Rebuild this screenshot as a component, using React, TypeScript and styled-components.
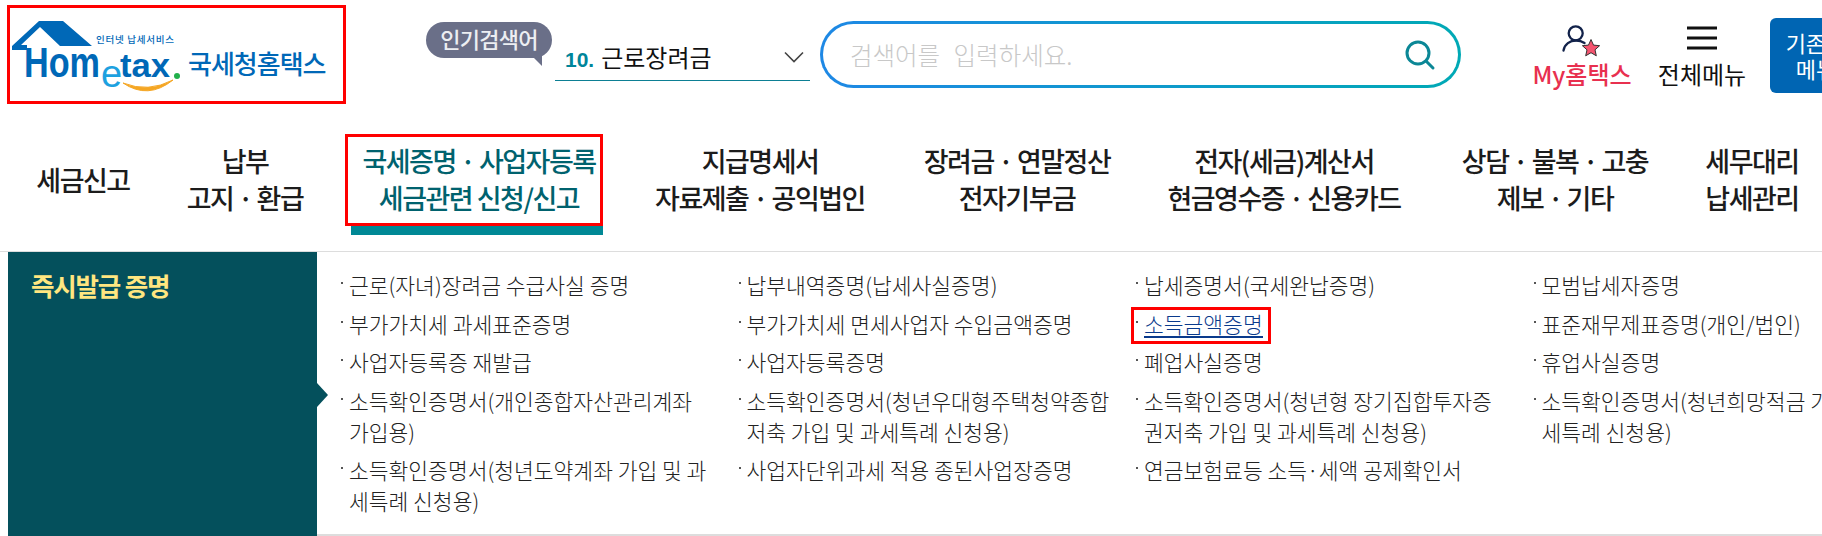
import React from "react";
import styled, { createGlobalStyle } from "styled-components";

const GlobalStyle = createGlobalStyle`
  html, body {
    margin: 0;
    padding: 0;
    background: #fff;
  }
  body {
    font-family: "Noto Sans CJK KR", "Noto Sans", sans-serif;
  }
`;

const Page = styled.div`
  width: 1822px;
  height: 536px;
  overflow: hidden;
  background: #fff;
`;

const Header = styled.header`
  display: flex;
  height: 120px;
  padding: 5px 0 0 7px;
  box-sizing: border-box;
`;

const LogoBox = styled.div`
  width: 339px;
  height: 99px;
  box-sizing: border-box;
  border: 3px solid #f00;
  flex: none;
`;

const PopularWrap = styled.div`
  display: flex;
  margin-left: 80px;
  padding-top: 17px;
  flex: none;
`;

const Bubble = styled.div`
  position: relative;
  width: 126px;
  height: 36px;
  border-radius: 18px;
  background: #6a6f88;
  color: #eceef2;
  font-size: 22px;
  font-weight: 500;
  line-height: 33px;
  text-align: center;
  letter-spacing: -0.7px;
  white-space: nowrap;

  &::after {
    content: "";
    position: absolute;
    right: 10px;
    bottom: -8px;
    border-top: 10px solid #6a6f88;
    border-left: 10px solid transparent;
  }
`;

const KeywordSelect = styled.div`
  display: flex;
  align-items: center;
  justify-content: space-between;
  width: 255px;
  height: 48px;
  margin: 11px 0 0 3px;
  padding: 0 6px 0 10px;
  box-sizing: border-box;
  border-bottom: 1px solid #0c7f94;
  font-size: 24px;
  color: #111;
`;

const KeywordRank = styled.b`
  color: #00859a;
  margin-right: 7px;
  font-family: "Liberation Sans", sans-serif;
  font-size: 21px;
`;

const SearchBox = styled.div`
  display: flex;
  align-items: center;
  justify-content: space-between;
  width: 641px;
  height: 67px;
  margin: 16px 0 0 10px;
  padding: 0 21px 0 27px;
  box-sizing: border-box;
  border: 3px solid transparent;
  border-radius: 34px;
  background:
    linear-gradient(#fff, #fff) padding-box,
    linear-gradient(90deg, #1e88e5, #00a9b5) border-box;
  color: #c8c8c8;
  font-size: 24.5px;
  font-weight: 300;
  word-spacing: 8px;
  flex: none;
`;

const QuickLink = styled.div<{ $width: number; $ml: number; $color: string; $weight: number }>`
  display: flex;
  flex-direction: column;
  align-items: center;
  width: ${(p) => p.$width}px;
  margin-left: ${(p) => p.$ml}px;
  padding-top: 19px;
  color: ${(p) => p.$color};
  font-size: 24px;
  font-weight: ${(p) => p.$weight};
  line-height: 26px;
  white-space: nowrap;
  flex: none;

  svg {
    height: 34px;
    margin-bottom: 3px;
  }
`;

const OldMenuButton = styled.div`
  width: 92px;
  height: 75px;
  margin: 13px 0 0 23px;
  padding-top: 11px;
  box-sizing: border-box;
  border-radius: 6px;
  background: #0065b3;
  color: #fff;
  font-size: 22px;
  line-height: 26px;
  text-align: center;
  white-space: pre;
  flex: none;
`;

const Nav = styled.nav`
  display: flex;
  height: 131px;
  border-bottom: 1px solid #ddd;
  box-sizing: content-box;
`;

const NavItem = styled.div<{ $width: number; $ml?: number; $pl?: number; $active?: boolean }>`
  position: relative;
  display: flex;
  align-items: center;
  justify-content: center;
  width: ${(p) => p.$width}px;
  margin-left: ${(p) => p.$ml ?? 0}px;
  height: 115px;
  padding-top: 3px;
  padding-left: ${(p) => p.$pl ?? 0}px;
  box-sizing: border-box;
  color: ${(p) => (p.$active ? "#00626e" : "#1c1c1c")};
  font-size: 27px;
  font-weight: 500;
  line-height: 37px;
  letter-spacing: -1.5px;
  text-align: center;
  white-space: pre;
  flex: none;
`;

const ActiveBar = styled.span`
  position: absolute;
  left: 6px;
  right: 0;
  top: 106px;
  height: 9px;
  background: #008895;
`;

const RedFrame = styled.span`
  position: absolute;
  left: 0;
  right: 0;
  top: 14px;
  height: 92px;
  box-sizing: border-box;
  border: 3px solid #f00;
`;

const Content = styled.div`
  display: flex;
  height: 284px;
  margin-left: 8px;
`;

const SidePanel = styled.aside`
  position: relative;
  width: 309px;
  padding: 18px 0 0 23px;
  box-sizing: border-box;
  background: #04505c;
  color: #ffe680;
  font-size: 25.5px;
  font-weight: 700;
  line-height: 30px;
  letter-spacing: -1.2px;
  flex: none;

  &::after {
    content: "";
    position: absolute;
    left: 100%;
    top: 131px;
    border-left: 11px solid #04505c;
    border-top: 12px solid transparent;
    border-bottom: 12px solid transparent;
  }
`;

const LinkGrid = styled.ul`
  display: grid;
  grid-template-columns: repeat(4, 397.5px);
  grid-auto-rows: min-content;
  row-gap: 7.6px;
  height: 284px;
  margin: 0;
  padding: 17px 0 0 23px;
  box-sizing: border-box;
  border-bottom: 2px solid #ddd;
  list-style: none;
  flex: 1;
`;

const LinkItem = styled.li`
  position: relative;
  padding-left: 9px;
  font-size: 21.5px;
  line-height: 31px;
  font-weight: 300;
  color: #222;
  white-space: pre;

  &::before {
    content: "";
    position: absolute;
    left: 1px;
    top: 13px;
    width: 2px;
    height: 2px;
    background: #555;
  }
`;

const Highlighted = styled.span`
  position: relative;
  color: #0a3a8c;
  border-bottom: 2px solid #0a3a8c;
  line-height: 24px;
  display: inline-block;

  &::after {
    content: "";
    position: absolute;
    left: -13px;
    right: -8px;
    top: -5px;
    bottom: -8px;
    border: 3px solid #f00;
  }
`;

const Logo = () => (
  <svg width="333" height="93" viewBox="10 8 333 93" style={{ display: "block" }}>
    <path d="M12 46 L39 21 H63 L92 46 H60 L40 27 L21 45 H27 V50 H12 Z" fill="#0068b7" />
    <text x="24" y="77" fontFamily="Liberation Sans" fontWeight="700" fontSize="42" textLength="76" lengthAdjust="spacingAndGlyphs" fill="#0068b7">
      Hom
    </text>
    <text x="101" y="87" fontFamily="Liberation Sans" fontSize="38" fill="#1da1e0">
      e
    </text>
    <text x="120" y="77" fontFamily="Liberation Sans" fontWeight="700" fontSize="34" textLength="50" lengthAdjust="spacingAndGlyphs" fill="#0068b7">
      tax
    </text>
    <circle cx="177" cy="76" r="3" fill="#22b04b" />
    <path d="M123 83 Q148 100 173 80 Q148 93 123 83 Z" fill="#f5a623" stroke="#f5a623" />
    <text x="96" y="43" fontSize="9.5" fontWeight="500" textLength="78" fill="#0068b7">
      인터넷 납세서비스
    </text>
    <text x="188" y="74" fontSize="26" fontWeight="500" letterSpacing="-1" fill="#0068b7">
      국세청홈택스
    </text>
  </svg>
);

const ChevronIcon = () => (
  <svg width="20" height="12" viewBox="0 0 20 12" fill="none">
    <path d="M1 1.5 L10 10.5 L19 1.5" stroke="#444" strokeWidth="1.6" />
  </svg>
);

const MyIcon = () => (
  <svg width="40" height="34" viewBox="0 0 40 34" fill="none">
    <circle cx="13.7" cy="9.3" r="7" stroke="#12224a" strokeWidth="2.3" />
    <path d="M1.5 26.5 C2.5 20 8 16.5 14 16.5 C17 16.5 20 17.3 22.5 19" stroke="#12224a" strokeWidth="2.3" strokeLinecap="round" />
    <path
      d="M29 15.5 L31.5 21.1 L37.6 21.7 L33 25.8 L34.3 31.8 L29 28.7 L23.7 31.8 L25 25.8 L20.4 21.7 L26.5 21.1 Z"
      fill="#f5546f"
      stroke="#333"
      strokeWidth="1"
      strokeLinejoin="round"
    />
  </svg>
);

const MenuIcon = () => (
  <svg width="30" height="34" viewBox="0 0 30 34">
    <path d="M0 4 H30 M0 14 H30 M0 24 H30" stroke="#111" strokeWidth="3" />
  </svg>
);

const SearchIcon = () => (
  <svg width="34" height="34" viewBox="0 0 34 34" fill="none">
    <circle cx="15" cy="15" r="11" stroke="#0b8796" strokeWidth="3" />
    <path d="M23 23 L30 30" stroke="#0b8796" strokeWidth="3" strokeLinecap="round" />
  </svg>
);

const navItems = [
  { label: "세금신고", width: 166 },
  { label: "납부\n고지 · 환급", width: 158 },
  { label: "국세증명 · 사업자등록\n세금관련 신청/신고", width: 258, ml: 21, pl: 10, active: true },
  { label: "지급명세서\n자료제출 · 공익법인", width: 314 },
  { label: "장려금 · 연말정산\n전자기부금", width: 200 },
  { label: "전자(세금)계산서\n현금영수증 · 신용카드", width: 334 },
  { label: "상담 · 불복 · 고충\n제보 · 기타", width: 208 },
  { label: "세무대리\n납세관리", width: 186 },
];

const links = [
  "근로(자녀)장려금 수급사실 증명",
  "납부내역증명(납세사실증명)",
  "납세증명서(국세완납증명)",
  "모범납세자증명",
  "부가가치세 과세표준증명",
  "부가가치세 면세사업자 수입금액증명",
  "소득금액증명",
  "표준재무제표증명(개인/법인)",
  "사업자등록증 재발급",
  "사업자등록증명",
  "폐업사실증명",
  "휴업사실증명",
  "소득확인증명서(개인종합자산관리계좌\n가입용)",
  "소득확인증명서(청년우대형주택청약종합\n저축 가입 및 과세특례 신청용)",
  "소득확인증명서(청년형 장기집합투자증\n권저축 가입 및 과세특례 신청용)",
  "소득확인증명서(청년희망적금 가입 및 과\n세특례 신청용)",
  "소득확인증명서(청년도약계좌 가입 및 과\n세특례 신청용)",
  "사업자단위과세 적용 종된사업장증명",
  "연금보험료등 소득·세액 공제확인서",
];

export default function App() {
  return (
    <Page>
      <GlobalStyle />
      <Header>
        <LogoBox>
          <Logo />
        </LogoBox>
        <PopularWrap>
          <Bubble>인기검색어</Bubble>
          <KeywordSelect>
            <span>
              <KeywordRank>10.</KeywordRank>근로장려금
            </span>
            <ChevronIcon />
          </KeywordSelect>
        </PopularWrap>
        <SearchBox>
          <span>검색어를 입력하세요.</span>
          <SearchIcon />
        </SearchBox>
        <QuickLink $width={102} $ml={70} $color="#e8304f" $weight={500}>
          <MyIcon />
          My홈택스
        </QuickLink>
        <QuickLink $width={90} $ml={24} $color="#111" $weight={400}>
          <MenuIcon />
          전체메뉴
        </QuickLink>
        <OldMenuButton>{"기존의\n메뉴"}</OldMenuButton>
      </Header>
      <Nav>
        {navItems.map((item) => (
          <NavItem key={item.label} $width={item.width} $ml={item.ml} $pl={item.pl} $active={item.active}>
            {item.label}
            {item.active && <RedFrame />}
            {item.active && <ActiveBar />}
          </NavItem>
        ))}
      </Nav>
      <Content>
        <SidePanel>즉시발급 증명</SidePanel>
        <LinkGrid>
          {links.map((text) => (
            <LinkItem key={text}>
              {text === "소득금액증명" ? <Highlighted>{text}</Highlighted> : text}
            </LinkItem>
          ))}
        </LinkGrid>
      </Content>
    </Page>
  );
}
